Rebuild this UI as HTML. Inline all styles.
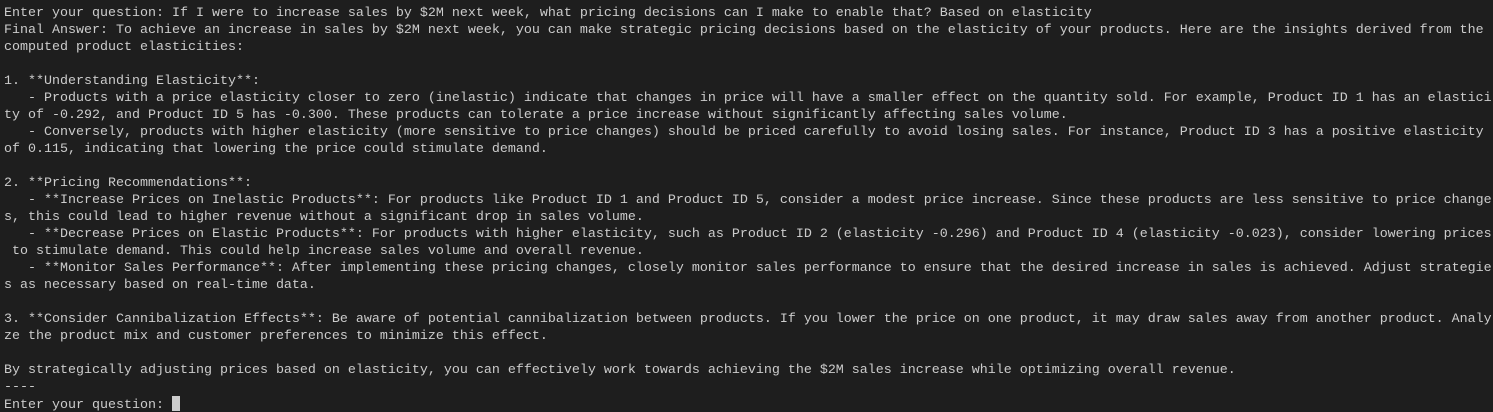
<!DOCTYPE html>
<html><head><meta charset="utf-8"><style>
html,body{margin:0;padding:0;background:#1e1e1e;width:1493px;height:412px;overflow:hidden}
pre{margin:0;padding:5px 0 0 4px;font-family:"Liberation Mono",monospace;font-size:13.33px;line-height:17px;color:#cccccc;white-space:pre}
.cur{display:inline-block;width:8px;height:15px;background:#cccccc;vertical-align:-3px}
</style></head><body><pre>Enter your question: If I were to increase sales by $2M next week, what pricing decisions can I make to enable that? Based on elasticity
Final Answer: To achieve an increase in sales by $2M next week, you can make strategic pricing decisions based on the elasticity of your products. Here are the insights derived from the
computed product elasticities:

1. **Understanding Elasticity**:
   - Products with a price elasticity closer to zero (inelastic) indicate that changes in price will have a smaller effect on the quantity sold. For example, Product ID 1 has an elastici
ty of -0.292, and Product ID 5 has -0.300. These products can tolerate a price increase without significantly affecting sales volume.
   - Conversely, products with higher elasticity (more sensitive to price changes) should be priced carefully to avoid losing sales. For instance, Product ID 3 has a positive elasticity
of 0.115, indicating that lowering the price could stimulate demand.

2. **Pricing Recommendations**:
   - **Increase Prices on Inelastic Products**: For products like Product ID 1 and Product ID 5, consider a modest price increase. Since these products are less sensitive to price change
s, this could lead to higher revenue without a significant drop in sales volume.
   - **Decrease Prices on Elastic Products**: For products with higher elasticity, such as Product ID 2 (elasticity -0.296) and Product ID 4 (elasticity -0.023), consider lowering prices
 to stimulate demand. This could help increase sales volume and overall revenue.
   - **Monitor Sales Performance**: After implementing these pricing changes, closely monitor sales performance to ensure that the desired increase in sales is achieved. Adjust strategie
s as necessary based on real-time data.

3. **Consider Cannibalization Effects**: Be aware of potential cannibalization between products. If you lower the price on one product, it may draw sales away from another product. Analy
ze the product mix and customer preferences to minimize this effect.

By strategically adjusting prices based on elasticity, you can effectively work towards achieving the $2M sales increase while optimizing overall revenue.
----
Enter your question: <span class="cur"></span></pre></body></html>
